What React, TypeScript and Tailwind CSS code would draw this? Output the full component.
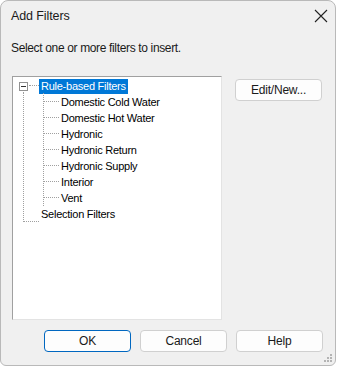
const children = [
  "Domestic Cold Water",
  "Domestic Hot Water",
  "Hydronic",
  "Hydronic Return",
  "Hydronic Supply",
  "Interior",
  "Vent",
];

function DialogButton({ label, primary }: { label: string; primary?: boolean }) {
  return (
    <button
      className={
        "h-[22px] w-[87px] rounded-[4px] border bg-[#fdfdfd] text-[12px] tracking-[-0.2px] text-[#1a1a1a] " +
        (primary ? "border-[#0067c0]" : "border-[#d0d0d0]")
      }
    >
      {label}
    </button>
  );
}

export default function App() {
  return (
    <div className="h-[367px] w-[337px] bg-white font-['Liberation_Sans',sans-serif]">
      <div className="relative flex h-[366px] w-[336px] flex-col rounded-t-[8px] rounded-b-[6px] border border-[#b9b9b9] bg-[#f0f0f0]">
        {/* Title bar */}
        <div className="flex h-[30px] items-center justify-between pl-[10px] pr-[7px]">
          <span className="text-[12.5px] tracking-[-0.1px] text-[#1a1a1a]">Add Filters</span>
          <svg width="14" height="14" viewBox="0 0 14 14" className="text-[#222]">
            <path d="M1 1 L13 13 M13 1 L1 13" stroke="currentColor" strokeWidth="1.1" fill="none" />
          </svg>
        </div>

        <div className="pl-[10px] pt-[8px] text-[12px] tracking-[-0.35px] text-[#1a1a1a]">
          Select one or more filters to insert.
        </div>

        <div className="mt-[19px] flex pl-[11px] pr-[13px]">
          {/* Tree */}
          <div className="h-[244px] w-[210px] border-t border-l border-t-[#a0a0a0] border-l-[#a0a0a0] border-b border-r border-b-[#e3e3e3] border-r-[#e3e3e3] bg-white text-[11px] tracking-[-0.25px] text-black">
            <div className="relative pl-[6px] pt-[1px]">
              {/* dotted lines */}
              <div className="absolute left-[10px] top-[15px] h-[130px] border-l border-dotted border-[#a0a0a0]" />
              <div className="absolute left-[16px] top-[8px] w-[10px] border-t border-dotted border-[#a0a0a0]" />
              <div className="absolute left-[11px] top-[144px] w-[15px] border-t border-dotted border-[#a0a0a0]" />
              <div className="absolute left-[30px] top-[16px] h-[113px] border-l border-dotted border-[#a0a0a0]" />
              {children.map((c, i) => (
                <div
                  key={c}
                  className="absolute left-[31px] w-[15px] border-t border-dotted border-[#a0a0a0]"
                  style={{ top: 24 + i * 16 }}
                />
              ))}

              <div className="flex h-[16px] items-center">
                <div className="relative z-10 flex h-[9px] w-[9px] items-center justify-center border border-[#919191] bg-white">
                  <div className="h-px w-[5px] bg-[#333]" />
                </div>
                <span className="ml-[11px] bg-[#0078d7] px-[2px] leading-[15px] text-white">
                  Rule-based Filters
                </span>
              </div>
              {children.map((c) => (
                <div key={c} className="flex h-[16px] items-center pl-[42px]">
                  {c}
                </div>
              ))}
              <div className="flex h-[16px] items-center pl-[22px]">Selection Filters</div>
            </div>
          </div>

          <div className="ml-auto pt-[1px]">
            <DialogButton label="Edit/New..." />
          </div>
        </div>

        {/* Buttons */}
        <div className="mt-[10px] flex justify-end gap-[9px] pr-[12px]">
          <DialogButton label="OK" primary />
          <DialogButton label="Cancel" />
          <DialogButton label="Help" />
        </div>

        {/* resize grip */}
        <svg className="absolute bottom-[2px] right-[2px]" width="10" height="10" viewBox="0 0 10 10">
          {[
            [8, 2],
            [8, 5],
            [5, 5],
            [8, 8],
            [5, 8],
            [2, 8],
          ].map(([x, y]) => (
            <rect key={`${x}-${y}`} x={x - 1} y={y - 1} width="2" height="2" fill="#b4b4b4" />
          ))}
        </svg>
      </div>
    </div>
  );
}
